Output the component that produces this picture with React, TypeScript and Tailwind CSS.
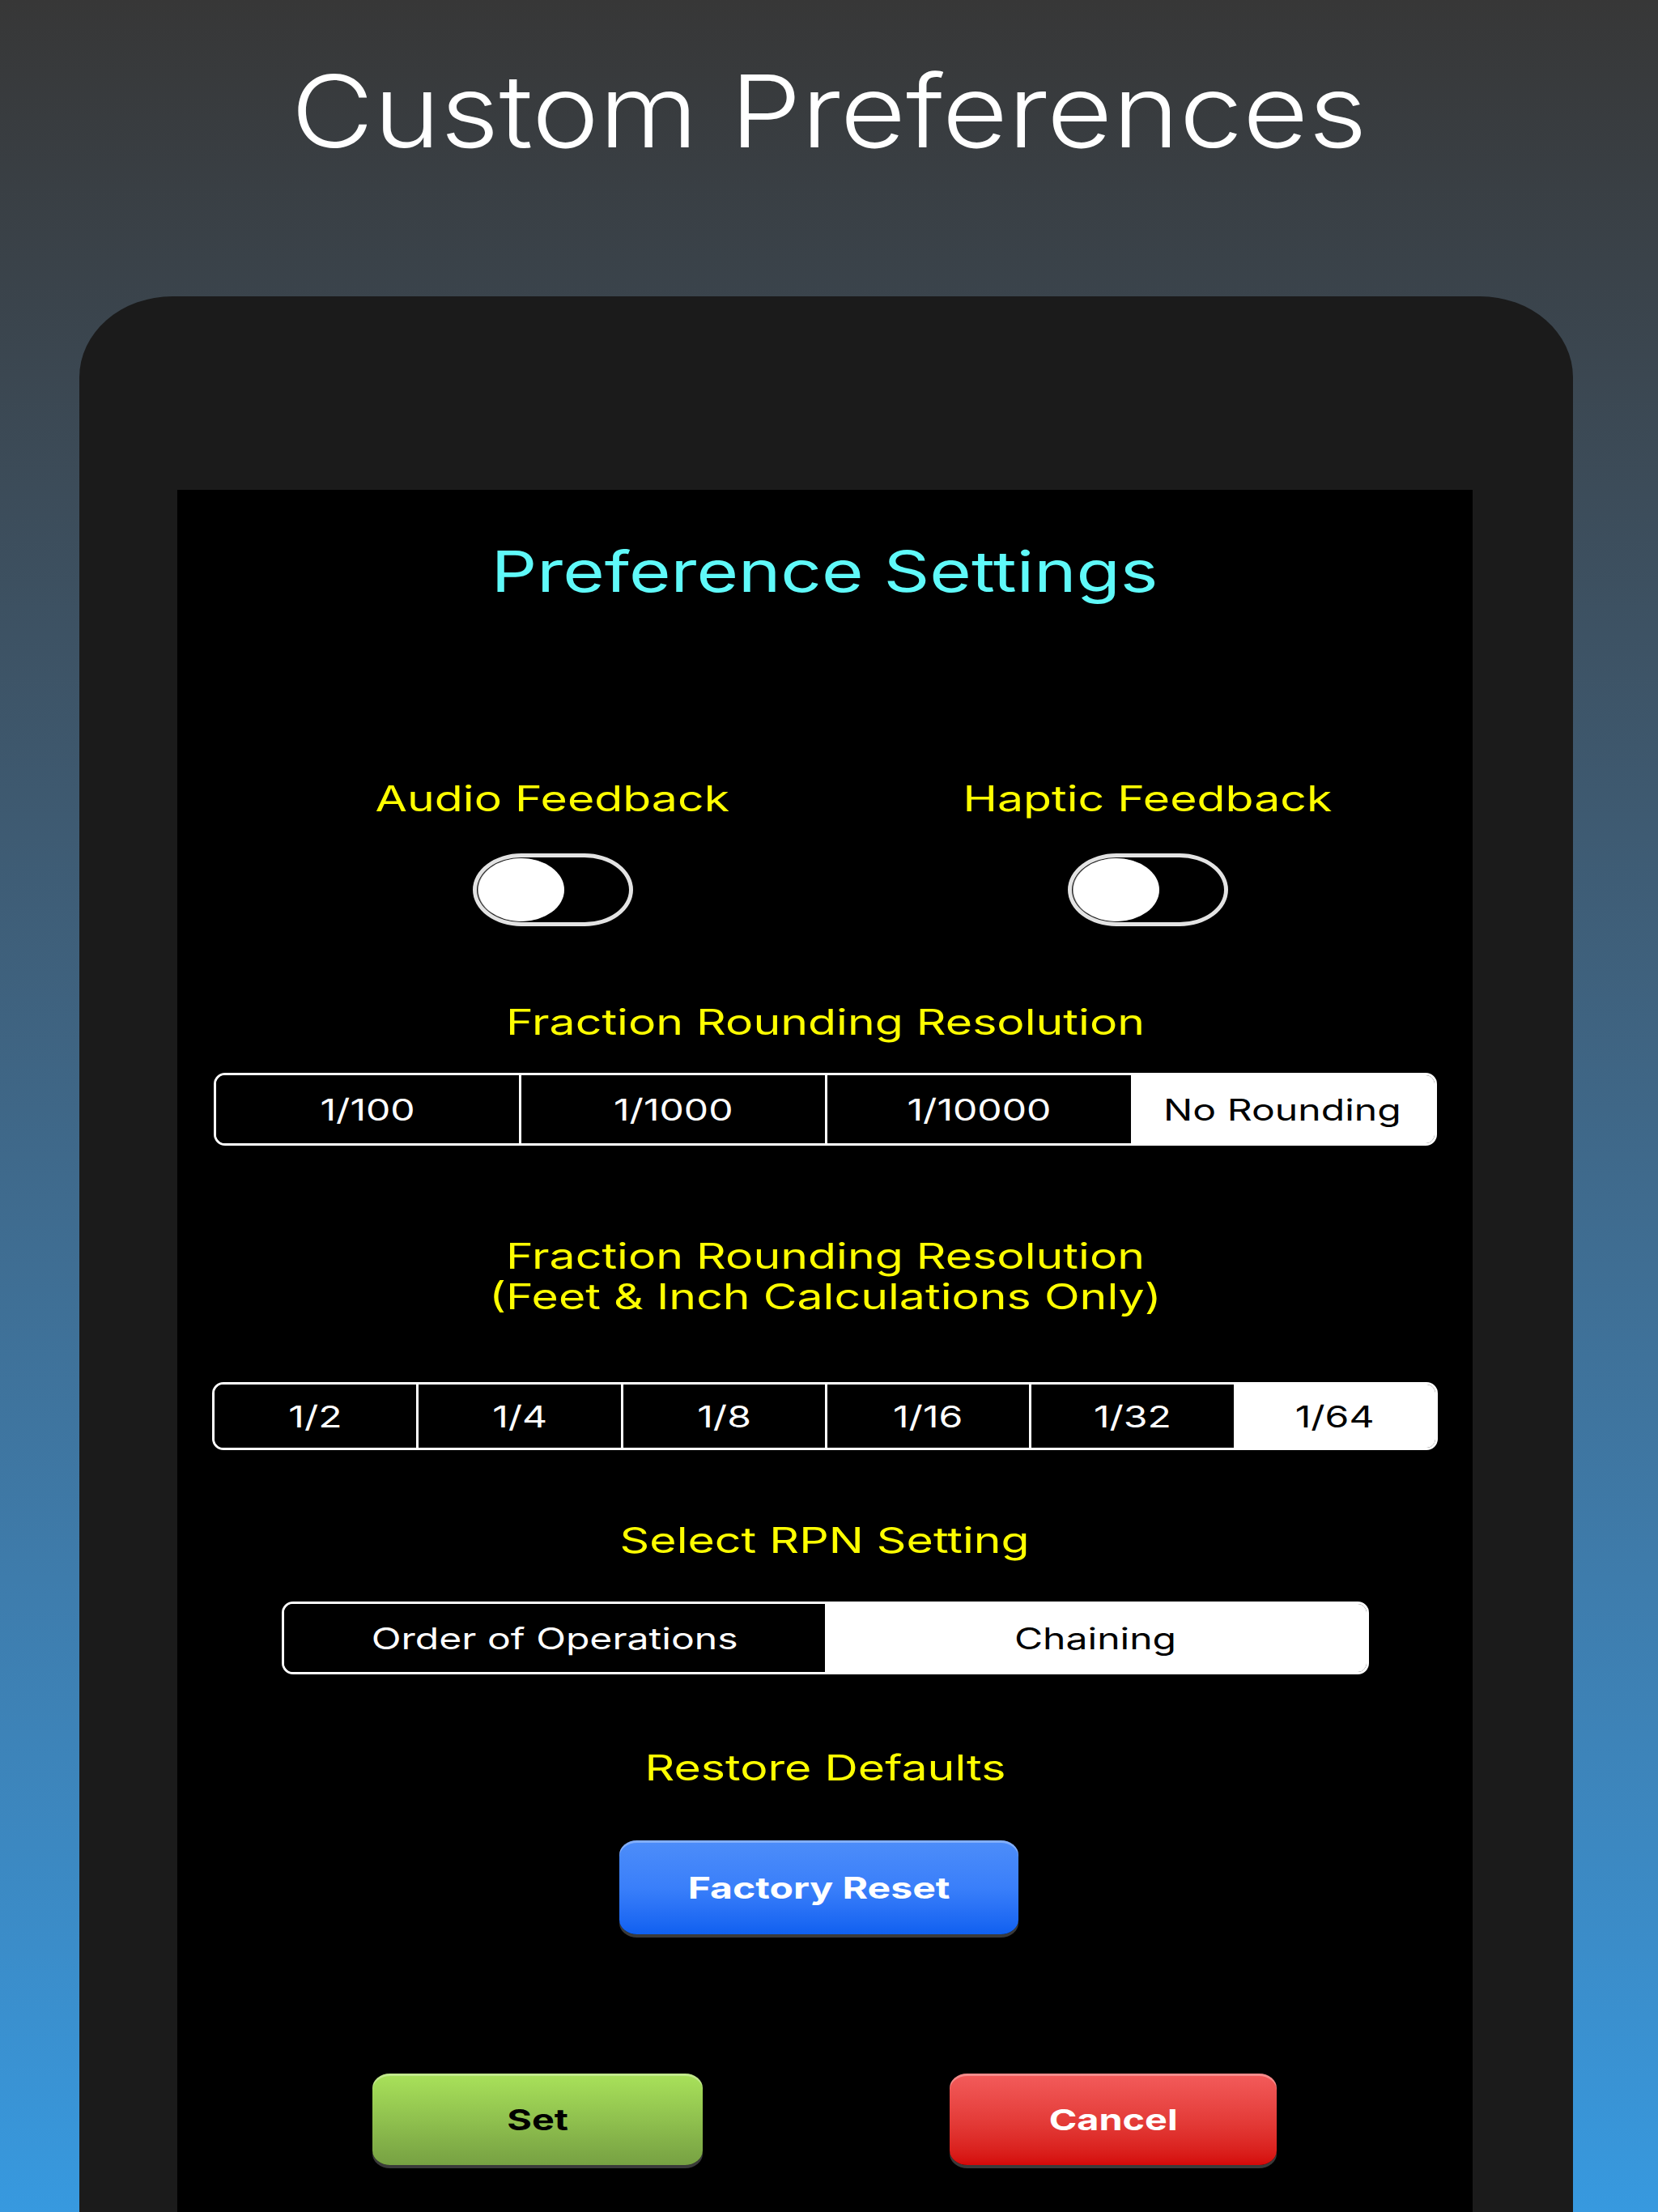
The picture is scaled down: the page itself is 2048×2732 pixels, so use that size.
import React from 'react';

function Wide({ children }: { children: React.ReactNode }) {
  return <span className="inline-block scale-x-[1.3] whitespace-nowrap">{children}</span>;
}

function Label({ children, className = '' }: { children: React.ReactNode; className?: string }) {
  return (
    <div className={`text-[44px] leading-none text-[#ffff00] text-center ${className}`}>
      <Wide>{children}</Wide>
    </div>
  );
}

function Toggle() {
  return (
    <div className="w-[198px] h-[90px] rounded-[60px/45px] border-[5px] border-[#e3e3e3] bg-black flex items-center px-[2px]">
      <div className="w-[106px] h-[78px] rounded-[50%] bg-white shadow-[-1px_0_1px_#bbb]" />
    </div>
  );
}

function Segmented({
  items,
  selected,
  className,
}: {
  items: string[];
  selected: number;
  className: string;
}) {
  return (
    <div className={`flex border-[3px] border-white rounded-[14px] overflow-hidden ${className}`}>
      {items.map((item, i) => (
        <div
          key={item}
          className={`flex-1 flex items-center justify-center text-[37px] leading-none ${
            i === selected ? 'bg-white text-black' : 'bg-black text-white'
          } ${i > 0 && i !== selected ? 'border-l-[3px] border-white' : ''}`}
        >
          <Wide>{item}</Wide>
        </div>
      ))}
    </div>
  );
}

export default function App() {
  return (
    <div className="w-[2048px] h-[2732px] overflow-hidden bg-linear-to-b from-[#373737] to-[#3799df] font-[family-name:Inter,_sans-serif] flex flex-col">
      <div className="h-[366px] pt-[75px] text-center text-white text-[124px] leading-none font-light">
        <span className="inline-block scale-x-[1.13] whitespace-nowrap">Custom Preferences</span>
      </div>

      <div className="ml-[98px] w-[1845px] flex-1 bg-[#1b1b1b] rounded-tl-[115px_100px] rounded-tr-[115px_100px] pt-[239px] pl-[121px]">
        <div className="w-[1600px] h-full bg-black flex flex-col items-center">
          <div className="mt-[66px] text-[70px] leading-none text-[#5ff9f9]">
            <span className="inline-block scale-x-[1.265] whitespace-nowrap">Preference Settings</span>
          </div>

          <div className="self-start ml-[96px] w-[1470px] mt-[223px] grid grid-cols-2">
            <div className="flex flex-col items-center">
              <Label>Audio Feedback</Label>
              <div className="mt-[46px]">
                <Toggle />
              </div>
            </div>
            <div className="flex flex-col items-center">
              <Label>Haptic Feedback</Label>
              <div className="mt-[46px]">
                <Toggle />
              </div>
            </div>
          </div>

          <Label className="mt-[96px]">Fraction Rounding Resolution</Label>

          <Segmented
            className="mt-[41px] w-[1511px] h-[90px]"
            items={['1/100', '1/1000', '1/10000', 'No Rounding']}
            selected={3}
          />

          <div className="mt-[111px] text-[44px] leading-[50px] text-[#ffff00] text-center">
            <div>
              <Wide>Fraction Rounding Resolution</Wide>
            </div>
            <div>
              <Wide>(Feet &amp; Inch Calculations Only)</Wide>
            </div>
          </div>

          <Segmented
            className="mt-[81px] w-[1514px] h-[84px]"
            items={['1/2', '1/4', '1/8', '1/16', '1/32', '1/64']}
            selected={5}
          />

          <Label className="mt-[89px]">Select RPN Setting</Label>

          <Segmented
            className="mt-[54px] w-[1343px] h-[90px]"
            items={['Order of Operations', 'Chaining']}
            selected={1}
          />

          <Label className="mt-[93px]">Restore Defaults</Label>

          <button className="self-start ml-[546px] mt-[68px] w-[493px] h-[116px] rounded-[22px/18px] bg-linear-to-b from-[#4d8df9] via-[#3a7ffa] to-[#0f60f0] shadow-[inset_0_3px_0_rgba(255,255,255,0.3),0_4px_0_#3a3a3a] text-white text-[37px] font-bold leading-none">
            <Wide>Factory Reset</Wide>
          </button>

          <div className="self-start ml-[241px] mt-[172px] flex gap-[305px]">
            <button className="w-[408px] h-[113px] rounded-[22px/18px] bg-linear-to-b from-[#a9e25a] to-[#77a143] shadow-[inset_0_3px_0_rgba(255,255,255,0.3),0_4px_0_#3a3a3a] text-black text-[36px] font-bold leading-none">
              <Wide>Set</Wide>
            </button>
            <button className="w-[404px] h-[113px] rounded-[22px/18px] bg-linear-to-b from-[#f35b5b] to-[#d50808] shadow-[inset_0_3px_0_rgba(255,255,255,0.3),0_4px_0_#3a3a3a] text-white text-[36px] font-bold leading-none">
              <Wide>Cancel</Wide>
            </button>
          </div>
        </div>
      </div>
    </div>
  );
}
